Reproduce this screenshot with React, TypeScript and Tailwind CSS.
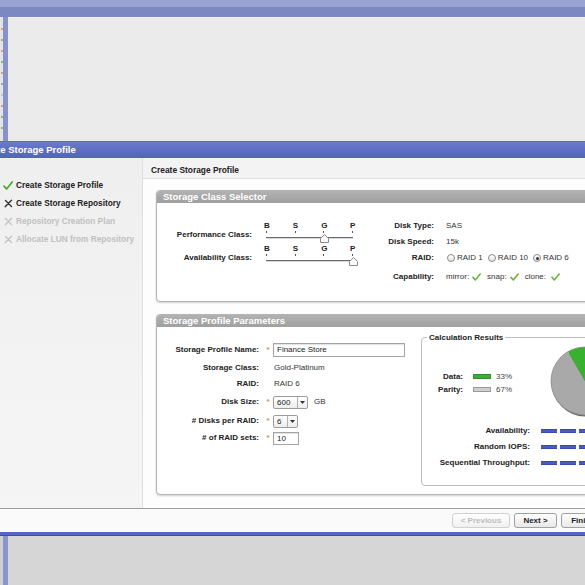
import React from 'react';

const Check = ({className = ''}: {className?: string}) => (
    <svg width="10" height="9" viewBox="0 0 10 9" className={className}>
        <path d="M1 5.2 L3.6 8 L9.2 1" fill="none" stroke="currentColor" strokeWidth="1.7" strokeLinecap="round" strokeLinejoin="round"/>
    </svg>
);

const Cross = ({className = ''}: {className?: string}) => (
    <svg width="9" height="9" viewBox="0 0 9 9" className={className}>
        <path d="M1.5 1.5 L7.5 7.5 M7.5 1.2 L1.2 7.8" fill="none" stroke="currentColor" strokeWidth="1.4" strokeLinecap="round"/>
    </svg>
);

const SmallCheck = () => (
    <svg width="9" height="8" viewBox="0 0 9 8" className="text-[#6db33f]">
        <path d="M1 4.4 L3.3 7 L8.2 1" fill="none" stroke="currentColor" strokeWidth="1.6" strokeLinecap="round" strokeLinejoin="round"/>
    </svg>
);

const Radio = ({on = false}: {on?: boolean}) => (
    <span className="w-[8px] h-[8px] rounded-full border border-[#8a8a8a] bg-gradient-to-b from-white to-[#e4e4e4] flex items-center justify-center">
        {on && <span className="w-[3px] h-[3px] rounded-full bg-[#333]"/>}
    </span>
);

const Slider = ({pos}: {pos: number}) => (
    <div className="w-[91px]">
        <div className="flex justify-between text-[8px] font-bold leading-[8px] text-[#222]">
            {['B', 'S', 'G', 'P'].map(l => <span key={l} className="w-[5px] text-center">{l}</span>)}
        </div>
        <div className="flex justify-between px-[2px] mt-[1px]">
            {[0, 1, 2, 3].map(i => <span key={i} className="w-px h-[2px] bg-[#555]"/>)}
        </div>
        <div className="relative mt-[4px] mx-[2px] h-[2px] border-t border-[#6a6a6a] bg-[#d8d8d8]">
            <svg width="9" height="9" viewBox="0 0 9 9" className="absolute -top-[4px]"
                 style={{left: `calc(${(pos * 100) / 3}% - 4px)`}}>
                <path d="M4.5 0.5 L8.5 4.5 L8.5 8.5 L0.5 8.5 L0.5 4.5 Z" fill="#fafafa" stroke="#8a8a8a" strokeWidth="1"/>
            </svg>
        </div>
    </div>
);

const Panel = ({title, className = '', children}: {title: string; className?: string; children?: React.ReactNode}) => (
    <div className={`rounded-[4px] border border-[#b4b4b4] bg-white overflow-hidden shadow-[0_1px_2px_rgba(0,0,0,0.18)] ${className}`}>
        <div className="h-[12px] bg-gradient-to-b from-[#b2b2b2] to-[#a0a0a0] pl-[6px] text-[9.5px] font-bold text-white leading-[12px]">
            {title}
        </div>
        {children}
    </div>
);

const Asterisk = () => (
    <span className="w-[14px] flex justify-center pl-[4px] text-[#e08a4e] text-[8px] leading-[8px] font-bold">*</span>
);

const SelectBox = ({value, width}: {value: string; width: string}) => (
    <div className={`h-[13px] flex rounded-[2px] border border-[#9c9c9c] bg-gradient-to-b from-white to-[#ededed] ${width}`}>
        <span className="flex-1 pl-[3px] text-[8px] leading-[11px]">{value}</span>
        <span className="w-[10px] border-l border-[#b0b0b0] flex items-center justify-center">
            <svg width="5" height="3" viewBox="0 0 5 3"><path d="M0 0 H5 L2.5 3 Z" fill="#333"/></svg>
        </span>
    </div>
);

const Bars = () => (
    <div className="flex gap-[3px]">
        {[0, 1, 2, 3, 4].map(i => (
            <span key={i} className="w-[16px] h-[4px] bg-[#4a5cc3] border-y border-[#3a4bb0]"/>
        ))}
    </div>
);

const sideItems = [
    {text: 'Create Storage Profile', state: 'done'},
    {text: 'Create Storage Repository', state: 'current'},
    {text: 'Repository Creation Plan', state: 'todo'},
    {text: 'Allocate LUN from Repository', state: 'todo'},
];

export default function App() {
    return (
        <div className="w-[585px] h-[585px] overflow-hidden bg-[#d5d5d5] flex flex-col font-['Liberation_Sans',Arial,sans-serif] text-[#222]">
            {/* background window */}
            <div className="h-[7px] shrink-0 bg-[#98a2d3]"/>
            <div className="h-[10px] shrink-0 bg-[#7d88c2]"/>
            <div className="h-[124px] shrink-0 flex">
                <div className="w-[3px] bg-[#e4e4e4] flex flex-col items-center gap-[9px] pt-[11px]">
                    {['#e0a060', '#8cbf6a', '#e0a060', '#8cbf6a', '#e0a060', '#8cbf6a', '#c8c8c8', '#e0a060', '#8cbf6a', '#8cbf6a'].map((c, i) => (
                        <span key={i} className="w-[2px] h-[2px]" style={{backgroundColor: c}}/>
                    ))}
                </div>
                <div className="w-[5px] bg-[#8891cc]"/>
                <div className="flex-1 bg-[#ebebeb] border-t border-[#f6f6f6]"/>
            </div>

            {/* dialog */}
            <div className="w-[610px] shrink-0 flex flex-col">
                <div className="h-[17px] bg-gradient-to-b from-[#6a7acb] to-[#5263bd] border-t border-[#5a6bc3] overflow-hidden">
                    <div className="-ml-[24px] text-white font-bold text-[9.5px] leading-[15px] whitespace-nowrap">
                        Create Storage Profile
                    </div>
                </div>

                <div className="h-[350px] flex">
                    {/* steps */}
                    <div className="w-[143px] shrink-0 bg-gradient-to-b from-[#efefef] to-[#f5f5f5] border-r border-[#e0e0e0] pt-[18px] pl-[3px]">
                        {sideItems.map(it => (
                            <div key={it.text} className="h-[18px] flex items-center gap-[3px] whitespace-nowrap">
                                <span className="w-[10px] flex justify-center">
                                    {it.state === 'done' ? <Check className="text-[#4aa82e]"/> :
                                        <Cross className={it.state === 'current' ? 'text-[#333]' : 'text-[#c4c4c4]'}/>}
                                </span>
                                <span className={`text-[8.3px] font-bold ${it.state === 'todo' ? 'text-[#c0c0c0]' : 'text-[#222]'}`}>
                                    {it.text}
                                </span>
                            </div>
                        ))}
                    </div>

                    {/* main */}
                    <div className="flex-1 bg-[#fdfdfd] flex flex-col">
                        <div className="h-[21px] bg-[#f3f3f3] border-b border-[#dedede] px-[8px] pt-[8px] leading-[8px] text-[8.4px] font-bold">
                            Create Storage Profile
                        </div>

                        <div className="px-[13px] pt-[11px] flex flex-col">
                            <Panel title="Storage Class Selector" className="h-[112px]">
                                <div className="flex">
                                    <div className="pt-[19px] flex flex-col gap-[6px]">
                                        {[{l: 'Performance Class:', p: 2}, {l: 'Availability Class:', p: 3}].map(r => (
                                            <div key={r.l} className="flex gap-[12px]">
                                                <span className="w-[95px] text-right text-[8px] font-bold leading-[8px] mt-[9px]">{r.l}</span>
                                                <Slider pos={r.p}/>
                                            </div>
                                        ))}
                                    </div>
                                    <div className="ml-[25px] pt-[15px] flex flex-col text-[8px]">
                                        <div className="h-[16px] flex items-center gap-[12px]">
                                            <span className="w-[54px] text-right font-bold">Disk Type:</span>
                                            <span className="text-[#333]">SAS</span>
                                        </div>
                                        <div className="h-[16px] flex items-center gap-[12px]">
                                            <span className="w-[54px] text-right font-bold">Disk Speed:</span>
                                            <span className="text-[#333]">15k</span>
                                        </div>
                                        <div className="h-[16px] flex items-center gap-[12px]">
                                            <span className="w-[54px] text-right font-bold">RAID:</span>
                                            <span className="flex items-center gap-[5px] text-[#333] pl-[1px]">
                                                <span className="flex items-center gap-[2px]"><Radio/>RAID 1</span>
                                                <span className="flex items-center gap-[2px]"><Radio/>RAID 10</span>
                                                <span className="flex items-center gap-[2px]"><Radio on/>RAID 6</span>
                                            </span>
                                        </div>
                                        <div className="h-[16px] mt-[3px] flex items-center gap-[12px]">
                                            <span className="w-[54px] text-right font-bold">Capability:</span>
                                            <span className="flex items-center text-[#333]">
                                                <span>mirror:</span><span className="ml-[3px]"><SmallCheck/></span>
                                                <span className="ml-[6px]">snap:</span><span className="ml-[3px]"><SmallCheck/></span>
                                                <span className="ml-[6px]">clone:</span><span className="ml-[5px]"><SmallCheck/></span>
                                            </span>
                                        </div>
                                    </div>
                                </div>
                            </Panel>

                            <Panel title="Storage Profile Parameters" className="h-[181px] mt-[12px]">
                                <div className="flex">
                                    <div className="w-[264px] shrink-0 pt-[16px] flex flex-col text-[8px]">
                                        <div className="h-[14px] flex items-center">
                                            <span className="w-[102px] text-right font-bold">Storage Profile Name:</span>
                                            <Asterisk/>
                                            <span className="w-[132px] h-[14px] border border-[#a4a4a4] shadow-[inset_0_1px_1px_rgba(0,0,0,0.12)] bg-white pl-[3px] leading-[12px]">Finance Store</span>
                                        </div>
                                        <div className="h-[16px] mt-[3px] flex items-center">
                                            <span className="w-[102px] text-right font-bold">Storage Class:</span>
                                            <span className="w-[14px]"/>
                                            <span className="pl-[1px] text-[#333]">Gold-Platinum</span>
                                        </div>
                                        <div className="h-[16px] flex items-center">
                                            <span className="w-[102px] text-right font-bold">RAID:</span>
                                            <span className="w-[14px]"/>
                                            <span className="pl-[1px] text-[#333]">RAID 6</span>
                                        </div>
                                        <div className="h-[14px] mt-[3px] flex items-center">
                                            <span className="w-[102px] text-right font-bold">Disk Size:</span>
                                            <Asterisk/>
                                            <SelectBox value="600" width="w-[35px]"/>
                                            <span className="ml-[6px] text-[#333]">GB</span>
                                        </div>
                                        <div className="h-[14px] mt-[5px] flex items-center">
                                            <span className="w-[102px] text-right font-bold"># Disks per RAID:</span>
                                            <Asterisk/>
                                            <SelectBox value="6" width="w-[25px]"/>
                                        </div>
                                        <div className="h-[14px] mt-[3px] flex items-center">
                                            <span className="w-[102px] text-right font-bold"># of RAID sets:</span>
                                            <Asterisk/>
                                            <span className="w-[26px] h-[13px] border border-[#a4a4a4] shadow-[inset_0_1px_1px_rgba(0,0,0,0.12)] bg-white pl-[3px] leading-[11px]">10</span>
                                        </div>
                                    </div>

                                    <div className="flex-1 mr-[6px] mt-[10px] h-[149px] relative rounded-[4px] border border-[#bdbdbd] text-[8px]">
                                        <span className="absolute -top-[5px] left-[5px] bg-white px-[2px] font-bold leading-[9px]">Calculation Results</span>
                                        <div className="h-[84px] flex">
                                            <div className="w-[127px] pt-[32px] flex flex-col">
                                                <div className="h-[13px] flex items-center">
                                                    <span className="w-[41px] text-right font-bold">Data:</span>
                                                    <span className="ml-[10px] w-[18px] h-[5px] bg-[#3cae38] border border-[#2d8f2b]"/>
                                                    <span className="ml-[5px] text-[#444]">33%</span>
                                                </div>
                                                <div className="h-[13px] flex items-center">
                                                    <span className="w-[41px] text-right font-bold">Parity:</span>
                                                    <span className="ml-[10px] w-[18px] h-[5px] bg-[#cfcfcf] border border-[#999]"/>
                                                    <span className="ml-[5px] text-[#444]">67%</span>
                                                </div>
                                            </div>
                                            <svg width="76" height="76" viewBox="0 0 76 76" className="mt-[7px] shrink-0">
                                                <circle cx="36.5" cy="37.5" r="34" fill="#6a6a6a"/>
                                                <path d="M36 36 L70 36 A34 34 0 1 1 19 6.6 Z" fill="#a9a9a9"/>
                                                <path d="M36 36 L19 6.6 A34 34 0 0 1 70 36 Z" fill="#38b030"/>
                                                <circle cx="36" cy="36" r="34" fill="none" stroke="#8c8c8c" strokeWidth="0.8"/>
                                            </svg>
                                        </div>
                                        <div className="pt-[1px] flex flex-col">
                                            {['Availability:', 'Random IOPS:', 'Sequential Throughput:'].map(l => (
                                                <div key={l} className="h-[16px] flex items-center">
                                                    <span className="w-[108px] text-right font-bold whitespace-nowrap">{l}</span>
                                                    <span className="ml-[11px]"><Bars/></span>
                                                </div>
                                            ))}
                                        </div>
                                    </div>
                                </div>
                            </Panel>
                        </div>
                    </div>
                </div>

                {/* footer */}
                <div className="h-[24px] border-t border-[#9c9c9c] bg-[#fafafa] flex justify-end gap-[4px] pt-[4px] pr-[5px]">
                    <button className="w-[58px] h-[15px] rounded-[3px] border border-[#d0d0d0] bg-gradient-to-b from-white to-[#f0f0f0] text-[8px] font-bold text-[#bdbdbd]">
                        &lt; Previous
                    </button>
                    <button className="w-[43px] h-[15px] rounded-[3px] border border-[#a0a0a0] bg-gradient-to-b from-white to-[#e8e8e8] text-[8px] font-bold text-[#222]">
                        Next &gt;
                    </button>
                    <button className="w-[44px] h-[15px] rounded-[3px] border border-[#a0a0a0] bg-gradient-to-b from-white to-[#e8e8e8] text-[8px] font-bold text-[#222]">
                        Finish
                    </button>
                </div>
                <div className="h-[4px] bg-[#5567c6] border-b border-[#3e4f9e]"/>
            </div>

            <div className="flex-1 flex">
                <div className="w-[3px] bg-[#cfcfcf]"/>
                <div className="w-[5px] bg-[#8a94cf]"/>
                <div className="flex-1 bg-[#d6d6d6]"/>
            </div>
        </div>
    );
}
